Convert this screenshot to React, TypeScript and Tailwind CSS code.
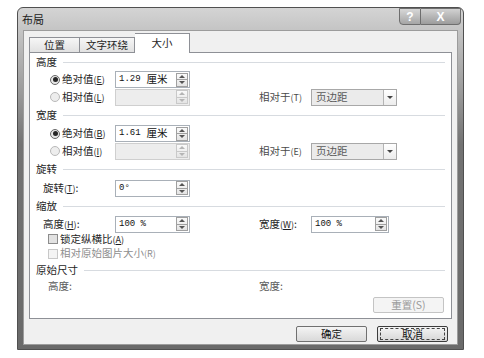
import React from 'react';

const CJK = '"Noto Sans CJK SC", "Noto Sans", sans-serif';
const MONO = '"Liberation Mono", "Noto Sans CJK SC", monospace';

function Section({ title }: { title: string }) {
  return (
    <div className="flex items-center h-full">
      <span className="text-[#1e1e1e]">{title}</span>
      <div className="flex-1 ml-[6px] h-px bg-[#d7dbe0]" />
    </div>
  );
}

function Radio({ checked }: { checked?: boolean }) {
  return (
    <span className={`w-[10px] h-[10px] rounded-full border flex items-center justify-center ${checked ? 'border-[#6a6a6a] bg-[#e6e6e6]' : 'border-[#b9b9b9] bg-[#ededed]'}`}>
      {checked && <span className="w-[5px] h-[5px] rounded-full bg-[#262626]" />}
    </span>
  );
}

function Check({ disabled }: { disabled?: boolean }) {
  return (
    <span className={`w-[10px] h-[10px] border ${disabled ? 'border-[#c8c8c8] bg-[#f4f4f4]' : 'border-[#8c8c8c] bg-[#e2e2e2]'}`} />
  );
}

function Spinner({ disabled }: { disabled?: boolean }) {
  const c = disabled ? 'border-[#c9c9c9]' : 'border-[#a0a0a0]';
  const t = disabled ? 'border-t-[#b5b5b5]' : 'border-t-[#555]';
  const b = disabled ? 'border-b-[#b5b5b5]' : 'border-b-[#555]';
  return (
    <div className={`w-[12px] h-[14px] my-auto mr-px border ${c} bg-gradient-to-b from-[#fafafa] to-[#e4e4e4] flex flex-col`}>
      <div className={`flex-1 flex items-center justify-center border-b ${c}`}>
        <span className={`w-0 h-0 border-l-[3px] border-r-[3px] border-b-[3px] border-l-transparent border-r-transparent ${b}`} />
      </div>
      <div className="flex-1 flex items-center justify-center">
        <span className={`w-0 h-0 border-l-[3px] border-r-[3px] border-t-[3px] border-l-transparent border-r-transparent ${t}`} />
      </div>
    </div>
  );
}

function SpinInput({ value, unit, disabled, w = 'w-[75px]' }: { value?: string; unit?: string; disabled?: boolean; w?: string }) {
  return (
    <div className={`flex h-[17px] ${w} border ${disabled ? 'border-[#cfcfcf] bg-[#ededed]' : 'border-[#a9b0b8] bg-white'}`}>
      <div className="flex-1 flex items-center pl-[3px] text-[#111]">
        {value && <span className="text-[9px]" style={{ fontFamily: MONO }}>{value}</span>}
        {unit && <span className="ml-[6px]">{unit}</span>}
      </div>
      <Spinner disabled={disabled} />
    </div>
  );
}

function Select() {
  return (
    <div className="flex h-[17px] w-[86px] border border-[#a8a8a8] bg-[#ebebeb]">
      <div className="flex-1 flex items-center pl-[4px] text-[#5a5a5a]">页边距</div>
      <div className="w-[13px] h-[15px] border-l border-[#b4b4b4] bg-gradient-to-b from-white to-[#ececec] flex items-center justify-center">
        <span className="w-0 h-0 border-l-[3px] border-r-[3px] border-t-[3px] border-l-transparent border-r-transparent border-t-[#444]" />
      </div>
    </div>
  );
}

function Key({ k }: { k: string }) {
  return (
    <span className="text-[9px]">
      (<u>{k}</u>)
    </span>
  );
}

function RadioRow({ checked, label, k, value, unit, rel, relKey }: { checked?: boolean; label: string; k: string; value?: string; unit?: string; rel?: boolean; relKey?: string }) {
  return (
    <div className="flex items-center h-full">
      <div className="w-[223px] flex items-center">
        <div className="w-[79px] flex items-center pl-[14px] gap-[2px]">
          <Radio checked={checked} />
          <span className="text-[#1e1e1e]">{label}<Key k={k} /></span>
        </div>
        <SpinInput value={value} unit={unit} disabled={!checked} />
      </div>
      {rel && (
        <>
          <div className="w-[52px] text-[#4a4a4a]">相对于<span className="text-[9px]">({relKey})</span></div>
          <Select />
        </>
      )}
    </div>
  );
}

function Btn({ label, focus, disabled }: { label: string; focus?: boolean; disabled?: boolean }) {
  return (
    <div className={`w-[71px] h-[16px] rounded-[2px] border flex items-center justify-center ${disabled ? 'border-[#c4c4c4] bg-[#f4f4f4] text-[#9a9a9a]' : focus ? 'border-[#3c3c3c] bg-gradient-to-b from-[#f4f4f4] to-[#d6d6d6] text-[#111]' : 'border-[#707070] bg-gradient-to-b from-[#f4f4f4] to-[#d9d9d9] text-[#111]'}`}>
      {focus ? (
        <div className="w-[65px] h-[12px] border border-dashed border-[#444] flex items-center justify-center">{label}</div>
      ) : (
        label
      )}
    </div>
  );
}

export default function App() {
  return (
    <div className="w-[484px] h-[358px] bg-white pt-[7px] pl-[17px] overflow-hidden text-[10.5px] leading-none" style={{ fontFamily: CJK }}>
      <div className="w-[447px] h-[343px] rounded-t-[6px] border border-[#505050] flex flex-col bg-[linear-gradient(180deg,#d4d4d4_0%,#bcbcbc_10%,#9a9a9a_25%,#737373_40%,#6a6a6a_100%)]">
        {/* title bar */}
        <div className="h-[22px] flex items-start justify-between pl-[4px] pr-[2px]">
          <span className="mt-[6px] text-[11px] text-[#1a1a1a]">布局</span>
          <div className="flex">
            <div className="w-[22px] h-[17px] rounded-bl-[4px] border border-[#6e6e6e] bg-gradient-to-b from-[#d8d8d8] to-[#a5a5a5] flex items-center justify-center text-white text-[12px] font-bold" style={{ fontFamily: '"Liberation Sans", sans-serif' }}>?</div>
            <div className="w-[40px] h-[17px] rounded-br-[4px] border border-l-0 border-[#6e6e6e] bg-gradient-to-b from-[#d2d2d2] to-[#9c9c9c] flex items-center justify-center text-white text-[12px] font-bold" style={{ fontFamily: '"Liberation Sans", sans-serif' }}>X</div>
          </div>
        </div>

        {/* client area */}
        <div className="flex-1 mx-[5px] mb-[4px] border border-[#9c9c9c] bg-[#f0f0f0] flex flex-col px-[5px] pt-[2px]">
          {/* tabs */}
          <div className="flex items-end h-[19px]">
            <div className="w-[51px] h-[15px] border border-b-0 border-[#8e9096] bg-gradient-to-b from-[#f6f6f6] to-[#e1e1e1] flex items-center justify-center text-[#1e1e1e]">位置</div>
            <div className="w-[55px] h-[15px] border border-b-0 border-l-0 border-[#8e9096] bg-gradient-to-b from-[#f6f6f6] to-[#e1e1e1] flex items-center justify-center text-[#1e1e1e]">文字环绕</div>
            <div className="w-[55px] h-[20px] -mb-px relative z-10 border border-b-0 border-l-0 border-[#8e9096] bg-white flex items-center justify-center text-[#1e1e1e]">大小</div>
          </div>

          {/* panel */}
          <div className="h-[267px] border border-[#8e9096] bg-white flex flex-col px-[6px]">
            <div className="h-[18px]"><Section title="高度" /></div>
            <div className="h-[17px]"><RadioRow checked label="绝对值" k="E" value="1.29" unit="厘米" /></div>
            <div className="h-[18px]"><RadioRow label="相对值" k="L" rel relKey="T" /></div>
            <div className="h-[19px]"><Section title="宽度" /></div>
            <div className="h-[17px]"><RadioRow checked label="绝对值" k="B" value="1.61" unit="厘米" /></div>
            <div className="h-[18px]"><RadioRow label="相对值" k="I" rel relKey="E" /></div>
            <div className="h-[19px]"><Section title="旋转" /></div>
            <div className="h-[18px] flex items-center">
              <div className="w-[79px] pl-[7px] text-[#1e1e1e]">旋转<Key k="T" />:</div>
              <SpinInput value="0°" />
            </div>
            <div className="h-[19px]"><Section title="缩放" /></div>
            <div className="h-[16px] flex items-center">
              <div className="w-[223px] flex items-center">
                <div className="w-[79px] pl-[7px] text-[#1e1e1e]">高度<Key k="H" />:</div>
                <SpinInput value="100 %" />
              </div>
              <div className="w-[52px] text-[#1e1e1e]">宽度<Key k="W" />:</div>
              <SpinInput value="100 %" w="w-[78px]" />
            </div>
            <div className="h-[14px] flex items-center pl-[12px] gap-[2px]">
              <Check />
              <span className="text-[#1e1e1e]">锁定纵横比<Key k="A" /></span>
            </div>
            <div className="h-[15px] flex items-center pl-[12px] gap-[2px]">
              <Check disabled />
              <span className="text-[#8e8e8e]">相对原始图片大小<span className="text-[9px]">(R)</span></span>
            </div>
            <div className="h-[18px]"><Section title="原始尺寸" /></div>
            <div className="h-[14px] flex items-center">
              <div className="w-[223px] pl-[12px] text-[#5a5a5a]">高度:</div>
              <div className="text-[#5a5a5a]">宽度:</div>
            </div>
            <div className="flex justify-end mt-[4px] pr-px">
              <Btn label="重置(S)" disabled />
            </div>
          </div>

          {/* buttons */}
          <div className="flex justify-end gap-[10px] mt-[7px] pr-[4px]">
            <Btn label="确定" />
            <Btn label="取消" focus />
          </div>
        </div>
      </div>
    </div>
  );
}
